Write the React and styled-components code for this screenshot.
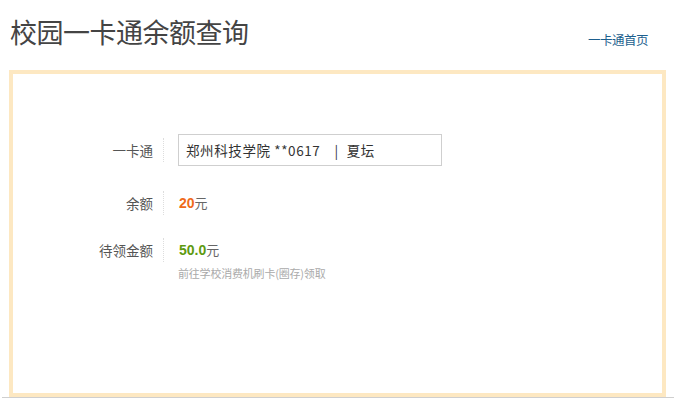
import React from 'react';
import styled, { createGlobalStyle } from 'styled-components';

const GlobalStyle = createGlobalStyle`
  body {
    margin: 0;
    background: #fff;
    font-family: "Noto Sans CJK SC", "Noto Sans", sans-serif;
  }
`;

const Page = styled.div`
  width: 676px;
  height: 407px;
  overflow: hidden;
`;

const Header = styled.div`
  display: flex;
  justify-content: space-between;
  align-items: center;
  height: 62px;
  padding: 0 28px 0 10px;
  margin-bottom: 8px;
`;

const Title = styled.h1`
  margin: 0;
  font-size: 27px;
  font-weight: 400;
  color: #444;
  letter-spacing: -0.5px;
`;

const HomeLink = styled.a`
  font-size: 12.5px;
  color: #1d5f8e;
  text-decoration: none;
  margin-top: 16px;
  letter-spacing: -0.5px;
`;

const Panel = styled.div`
  margin: 0 10px 0 9px;
  height: 259px;
  border: 4px solid #fde8c2;
  padding-top: 60px;
`;

const Row = styled.div`
  display: flex;
  align-items: ${p => (p.top ? 'flex-start' : 'center')};
  margin-bottom: ${p => p.gap || 0}px;
`;

const Label = styled.div`
  width: 140px;
  text-align: right;
  font-size: 13.5px;
  color: #555;
  line-height: 24px;
`;

const Divider = styled.div`
  width: 0;
  height: 24px;
  margin: 0 14px 0 10px;
  border-left: 1px dotted #ddd;
`;

const Field = styled.div`
  width: 255px;
  height: 30px;
  border: 1px solid #cfcfcf;
  display: flex;
  align-items: center;
  padding-left: 7px;
  font-size: 13.5px;
  color: #333;
  letter-spacing: 0.6px;
`;

const Bar = styled.span`
  margin: 0 8px 0 14px;
`;

const Value = styled.div`
  font-size: 13px;
  color: #666;
  line-height: 24px;
  padding-left: 1px;
`;

const Amount = styled.b`
  font-family: "Liberation Sans", Arial, sans-serif;
  font-size: 14px;
  color: ${p => p.color};
`;

const Hint = styled.div`
  font-size: 11px;
  color: #aaa;
  line-height: 24px;
  margin-top: -1px;
  letter-spacing: -0.2px;
`;

const BottomRule = styled.div`
  margin: 0 2px;
  height: 1px;
  background: #cfcfcf;
`;

const App = () => (
  <Page>
    <GlobalStyle />
    <Header>
      <Title>校园一卡通余额查询</Title>
      <HomeLink href="#">一卡通首页</HomeLink>
    </Header>
    <Panel>
      <Row gap={25}>
        <Label>一卡通</Label>
        <Divider />
        <Field>
          郑州科技学院 **0617<Bar>|</Bar>夏坛
        </Field>
      </Row>
      <Row gap={23}>
        <Label>余额</Label>
        <Divider />
        <Value>
          <Amount color="#ef6a1a">20</Amount>元
        </Value>
      </Row>
      <Row top>
        <Label>待领金额</Label>
        <Divider />
        <div>
          <Value>
            <Amount color="#5e9a10">50.0</Amount>元
          </Value>
          <Hint>前往学校消费机刷卡(圈存)领取</Hint>
        </div>
      </Row>
    </Panel>
    <BottomRule />
  </Page>
);

export default App;
